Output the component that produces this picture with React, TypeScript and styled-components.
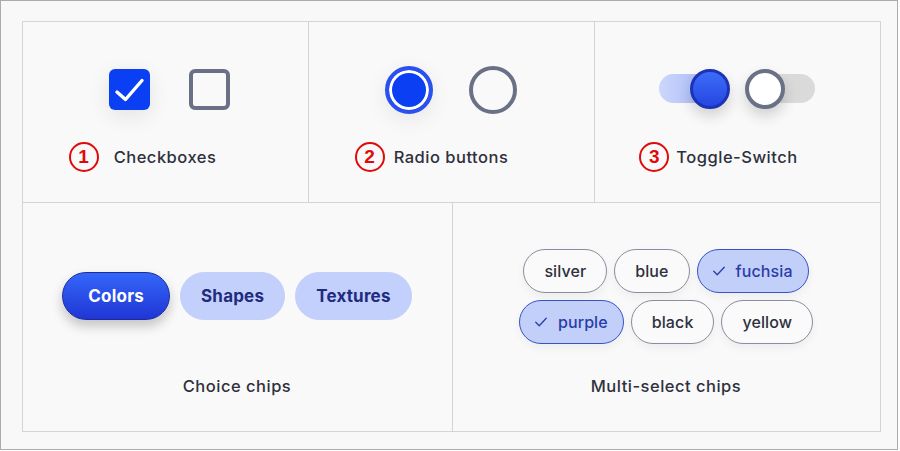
import React from "react";
import styled, { createGlobalStyle } from "styled-components";

const GlobalStyle = createGlobalStyle`
  html, body {
    margin: 0;
    padding: 0;
    background: #ffffff;
  }
  body {
    font-family: Inter, "Noto Sans", sans-serif;
    color: #2e303d;
  }
`;

const Frame = styled.div`
  box-sizing: border-box;
  width: 898px;
  height: 450px;
  border: 1.5px solid #ababab;
  background: #f8f8f8;
  padding: 19.5px 0 0 20.5px;
`;

const Panel = styled.div`
  box-sizing: border-box;
  width: 859px;
  height: 411px;
  border: 1.5px solid #d4d4d4;
  background: #f9f9f9;
  display: flex;
  flex-direction: column;
`;

const Row = styled.div<{ $height: number; $top?: boolean }>`
  display: flex;
  height: ${({ $height }) => $height}px;
  border-bottom: ${({ $top }) => ($top ? "1.5px solid #d4d4d4" : "none")};
`;

const Cell = styled.div<{ $padTop: number; $width?: number }>`
  box-sizing: border-box;
  flex: ${({ $width }) => ($width ? `0 0 ${$width}px` : "1 1 0")};
  display: flex;
  flex-direction: column;
  align-items: center;
  padding-top: ${({ $padTop }) => $padTop}px;
  & + & {
    border-left: 1.5px solid #d4d4d4;
  }
`;

const Controls = styled.div<{ $gap: number; $shift?: number }>`
  display: flex;
  align-items: center;
  height: 48px;
  gap: ${({ $gap }) => $gap}px;
  margin-left: ${({ $shift }) => $shift ?? 0}px;
`;

const Label = styled.div<{ $mt: number }>`
  position: relative;
  margin-top: ${({ $mt }) => $mt}px;
  font-size: 16.5px;
  font-weight: 500;
  line-height: 20px;
  letter-spacing: 0.5px;
  color: #2e303d;
  white-space: nowrap;
`;

const Badge = styled.span<{ $gap: number }>`
  position: absolute;
  top: 50%;
  right: calc(100% + ${({ $gap }) => $gap}px);
  transform: translateY(-50%);
  box-sizing: border-box;
  width: 30px;
  height: 30px;
  border: 2px solid #e00a0a;
  border-radius: 50%;
  display: flex;
  align-items: center;
  justify-content: center;
  color: #e00a0a;
  font-family: "Liberation Sans", Arial, sans-serif;
  font-weight: 700;
  font-size: 19px;
  letter-spacing: 0;
`;

const CheckBox = styled.div<{ $checked?: boolean }>`
  box-sizing: border-box;
  width: 41px;
  height: 41px;
  border-radius: 6px;
  display: flex;
  align-items: center;
  justify-content: center;
  background: ${({ $checked }) => ($checked ? "#0b3ff3" : "#f9f9f9")};
  border: ${({ $checked }) => ($checked ? "none" : "4px solid #6a7086")};
  box-shadow: ${({ $checked }) =>
    $checked ? "0 6px 22px rgba(0, 0, 0, 0.09)" : "none"};
`;

const Radio = styled.div<{ $checked?: boolean }>`
  box-sizing: border-box;
  width: 48px;
  height: 48px;
  border-radius: 50%;
  border: 4px solid ${({ $checked }) => ($checked ? "#2a50f0" : "#6a7086")};
  background: ${({ $checked }) => ($checked ? "#0b3ff3" : "#f9f9f9")};
  box-shadow: ${({ $checked }) =>
    $checked
      ? "inset 0 0 0 3px #ffffff, 0 6px 22px rgba(0, 0, 0, 0.08)"
      : "none"};
`;

const Switch = styled.div`
  position: relative;
  width: 70px;
  height: 40px;
`;

const Track = styled.div<{ $on?: boolean }>`
  position: absolute;
  top: 5.5px;
  height: 29px;
  border-radius: 15px;
  left: ${({ $on }) => ($on ? "0" : "14px")};
  right: ${({ $on }) => ($on ? "10px" : "0")};
  background: ${({ $on }) =>
    $on ? "linear-gradient(90deg, #cdd7fc 0%, #9fb3f7 100%)" : "#dadada"};
`;

const Thumb = styled.div<{ $on?: boolean }>`
  position: absolute;
  top: 0;
  left: ${({ $on }) => ($on ? "31px" : "0")};
  box-sizing: border-box;
  width: 40px;
  height: 40px;
  border-radius: 50%;
  border: ${({ $on }) => ($on ? "3px solid #1c33b5" : "4px solid #6a7086")};
  background: ${({ $on }) =>
    $on ? "linear-gradient(180deg, #3d6cf9 0%, #2547e0 100%)" : "#ffffff"};
  box-shadow: 0 7px 14px rgba(0, 0, 0, 0.16);
`;

const ChoiceRow = styled.div`
  display: flex;
  gap: 10px;
  align-items: center;
  height: 48px;
`;

const ChoiceChip = styled.div<{ $selected?: boolean }>`
  box-sizing: border-box;
  height: 48px;
  padding: 0 ${({ $selected }) => ($selected ? "25px" : "20px")};
  border-radius: 24px;
  display: flex;
  align-items: center;
  font-size: 17px;
  font-weight: 700;
  letter-spacing: 0.2px;
  color: ${({ $selected }) => ($selected ? "#ffffff" : "#1f2b7e")};
  background: ${({ $selected }) =>
    $selected ? "linear-gradient(180deg, #3466fa 0%, #2036d4 100%)" : "#c3d0fb"};
  border: ${({ $selected }) =>
    $selected ? "1.5px solid #1d2c9c" : "1.5px solid #c3d0fb"};
  box-shadow: ${({ $selected }) =>
    $selected ? "0 6px 12px rgba(0, 0, 0, 0.22)" : "none"};
`;

const ChipGrid = styled.div`
  display: flex;
  flex-direction: column;
  align-items: center;
  gap: 7px;
`;

const ChipRow = styled.div`
  display: flex;
  gap: 7px;
`;

const Chip = styled.div<{ $selected?: boolean }>`
  box-sizing: border-box;
  height: 44px;
  border-radius: 22px;
  padding: ${({ $selected }) => ($selected ? "0 15px 0 14px" : "0 20px")};
  display: flex;
  align-items: center;
  gap: 10px;
  font-size: 16px;
  font-weight: 500;
  letter-spacing: 0.1px;
  color: ${({ $selected }) => ($selected ? "#2a3da8" : "#2e303d")};
  background: ${({ $selected }) => ($selected ? "#c1cff9" : "#fafafa")};
  border: 1.5px solid ${({ $selected }) => ($selected ? "#3953c6" : "#8a8e9c")};
  box-shadow: 0 4px 10px rgba(0, 0, 0, 0.05);
`;

const Check = ({ size, color, width }: { size: number; color: string; width: number }) => (
  <svg width={size} height={size} viewBox="0 0 24 24" fill="none">
    <path
      d="M3 12.5 L9 18.5 L21 5.5"
      stroke={color}
      strokeWidth={width}
      strokeLinecap="round"
      strokeLinejoin="round"
    />
  </svg>
);

const BoxCheck = () => (
  <svg width="41" height="41" viewBox="0 0 41 41" fill="none">
    <path
      d="M8 23 L16.5 30.5 L33 11.5"
      stroke="#ffffff"
      strokeWidth={3.4}
      strokeLinecap="round"
      strokeLinejoin="round"
    />
  </svg>
);

const multiRows: { name: string; selected?: boolean }[][] = [
  [{ name: "silver" }, { name: "blue" }, { name: "fuchsia", selected: true }],
  [{ name: "purple", selected: true }, { name: "black" }, { name: "yellow" }],
];

export default function App() {
  return (
    <>
      <GlobalStyle />
      <Frame>
        <Panel>
          <Row $height={180} $top>
            <Cell $padTop={44}>
              <Controls $gap={39} $shift={8}>
                <CheckBox $checked>
                  <BoxCheck />
                </CheckBox>
                <CheckBox />
              </Controls>
              <Label $mt={33}>
                <Badge $gap={15}>1</Badge>
                Checkboxes
              </Label>
            </Cell>
            <Cell $padTop={44}>
              <Controls $gap={36}>
                <Radio $checked />
                <Radio />
              </Controls>
              <Label $mt={33}>
                <Badge $gap={9}>2</Badge>
                Radio buttons
              </Label>
            </Cell>
            <Cell $padTop={43}>
              <Controls $gap={16}>
                <Switch>
                  <Track $on />
                  <Thumb $on />
                </Switch>
                <Switch>
                  <Track />
                  <Thumb />
                </Switch>
              </Controls>
              <Label $mt={34}>
                <Badge $gap={7}>3</Badge>
                Toggle-Switch
              </Label>
            </Cell>
          </Row>
          <Row $height={228}>
            <Cell $padTop={69} $width={429}>
              <ChoiceRow>
                <ChoiceChip $selected>Colors</ChoiceChip>
                <ChoiceChip>Shapes</ChoiceChip>
                <ChoiceChip>Textures</ChoiceChip>
              </ChoiceRow>
              <Label $mt={56}>Choice chips</Label>
            </Cell>
            <Cell $padTop={46}>
              <ChipGrid>
                {multiRows.map((row, i) => (
                  <ChipRow key={i}>
                    {row.map((c) => (
                      <Chip key={c.name} $selected={c.selected}>
                        {c.selected && <Check size={14} color="#2a3da8" width={2.2} />}
                        {c.name}
                      </Chip>
                    ))}
                  </ChipRow>
                ))}
              </ChipGrid>
              <Label $mt={32}>Multi-select chips</Label>
            </Cell>
          </Row>
        </Panel>
      </Frame>
    </>
  );
}
